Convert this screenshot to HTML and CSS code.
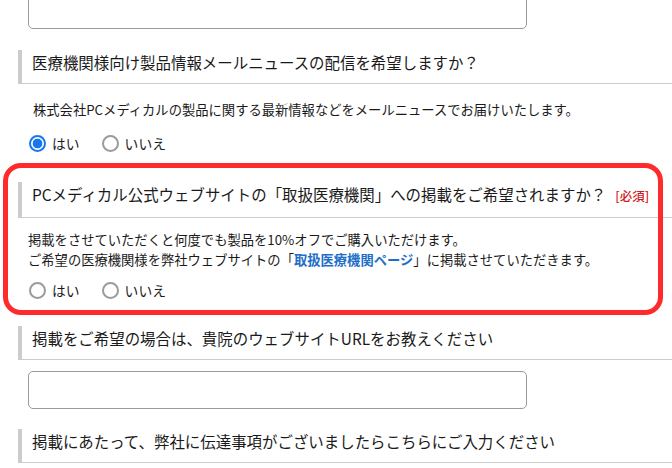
FILE: index.html
```html
<!DOCTYPE html>
<html lang="ja">
<head>
    <meta charset="UTF-8">
    <meta name="viewport" content="width=device-width, initial-scale=1.0">
    <title>お問い合わせフォーム</title>
    <link rel="stylesheet" href="styles.css">
</head>
<body>
    <form class="entry-form">
        <div class="field field-top">
            <textarea class="text-area" name="address"></textarea>
        </div>

        <div class="question question-news">
            <h3 class="question-title">医療機関様向け製品情報メールニュースの配信を希望しますか？</h3>
            <p class="question-note note-news">株式会社PCメディカルの製品に関する最新情報などをメールニュースでお届けいたします。</p>
            <div class="choices">
                <label class="choice"><input type="radio" name="news" checked>はい</label>
                <label class="choice"><input type="radio" name="news">いいえ</label>
            </div>
        </div>

        <div class="question question-listing is-highlight">
            <h3 class="question-title">PCメディカル公式ウェブサイトの「取扱医療機関」への掲載をご希望されますか？<span class="required">[必須]</span></h3>
            <p class="question-note note-listing">掲載をさせていただくと何度でも製品を10%オフでご購入いただけます。<br>ご希望の医療機関様を弊社ウェブサイトの「<a href="#" class="note-link">取扱医療機関ページ</a>」に掲載させていただきます。</p>
            <div class="choices">
                <label class="choice"><input type="radio" name="listing">はい</label>
                <label class="choice"><input type="radio" name="listing">いいえ</label>
            </div>
        </div>

        <div class="question question-url">
            <h3 class="question-title">掲載をご希望の場合は、貴院のウェブサイトURLをお教えください</h3>
            <input type="text" class="text-input" name="url">
        </div>

        <div class="question question-message">
            <h3 class="question-title">掲載にあたって、弊社に伝達事項がございましたらこちらにご入力ください</h3>
        </div>
    </form>
</body>
</html>
```

FILE: styles.css
```css
:root {
  --text: #1a1a1a;
  --rule: #cccccc;
  --field-border: #9a9a9a;
  --highlight: #ff2b2b;
  --radio-blue: #1677ef;
  --link-blue: #1f6fc8;
}

html, body {
  margin: 0;
  height: 100%;
  overflow: hidden;
  background: #ffffff;
}

body {
  color: var(--text);
  font-family: "Noto Sans CJK JP", "Noto Sans", sans-serif;
}

.entry-form {
  padding-left: 18px;
}

/* text fields */
.text-area,
.text-input {
  display: block;
  box-sizing: border-box;
  width: 499px;
  margin: 0 0 0 10px;
  border: 1px solid var(--field-border);
  border-radius: 5px;
  background: #ffffff;
  font: inherit;
}

.text-area {
  height: 80px;
  margin-top: -51px;
  resize: none;
}

.text-input {
  height: 38px;
  margin-top: 11px;
}

/* question headings */
.question-title {
  margin: 0;
  padding: 1px 0 10px 10px;
  border-left: 4px solid var(--rule);
  border-bottom: 1px solid var(--rule);
  font-size: 15.45px;
  font-weight: normal;
  line-height: 22px;
}

.required {
  margin-left: 9px;
  color: #cf1b1b;
  font-size: 12.5px;
  font-weight: 500;
}

.question-news { margin-top: 21px; }
.question-listing { margin-top: 29px; }
.question-url { margin-top: 26px; }
.question-message { margin-top: 20px; }

.question-note {
  margin: 0;
  font-size: 13.3px;
  line-height: 20px;
}

.note-news {
  margin-top: 16px;
  padding-left: 15px;
}

.note-listing {
  margin-top: 12px;
  padding-left: 10px;
}

.note-link {
  color: var(--link-blue);
  font-weight: bold;
  text-decoration: none;
}

/* radio buttons */
.choices {
  display: flex;
  gap: 22px;
  padding-left: 11px;
  margin-top: 13px;
  height: 20px;
  align-items: center;
}

.question-listing .choices {
  margin-top: 10px;
}

.choice {
  display: inline-flex;
  align-items: center;
  gap: 6px;
  font-size: 13.8px;
  line-height: 20px;
}

.choice input {
  appearance: none;
  -webkit-appearance: none;
  box-sizing: border-box;
  width: 17px;
  height: 17px;
  margin: 0;
  border: 2px solid #9b9b9b;
  border-radius: 50%;
  background: #ffffff;
}

.choice input:checked {
  border-color: var(--radio-blue);
  background: radial-gradient(circle, var(--radio-blue) 0 4.5px, #ffffff 5.2px);
}

/* highlighted question frame */
.is-highlight {
  position: relative;
}

.is-highlight::before {
  content: "";
  position: absolute;
  top: -19px;
  left: -15px;
  right: 9px;
  bottom: -15px;
  border: 5px solid var(--highlight);
  border-radius: 18px;
  pointer-events: none;
}
```
